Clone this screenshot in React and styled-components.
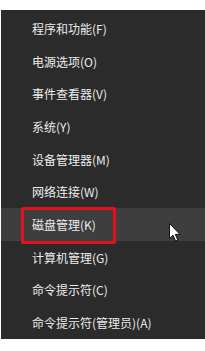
import styled, { createGlobalStyle } from 'styled-components';

const GlobalStyle = createGlobalStyle`
  html, body {
    margin: 0;
    padding: 0;
    background: #ffffff;
  }
`;

const Menu = styled.div`
  position: relative;
  margin: 10px 0 0 1px;
  width: 204px;
  height: 329px;
  box-sizing: border-box;
  padding-top: 2px;
  background: #2b2b2b;
  display: flex;
  flex-direction: column;
  font-family: "Noto Sans CJK SC", "Noto Sans", sans-serif;
`;

const Item = styled.div`
  height: 32.7px;
  display: flex;
  align-items: center;
  padding-left: 31px;
  font-size: 12px;
  color: #ebebeb;
  background: ${props => (props.$hover ? '#3e3e3e' : 'transparent')};
`;

const Mark = styled.div`
  position: absolute;
  left: 20px;
  top: 197px;
  width: 95px;
  height: 37px;
  box-sizing: border-box;
  border: 3px solid #e3101c;
  border-radius: 2px;
`;

const Cursor = styled.svg`
  position: absolute;
  left: 168px;
  top: 213px;
`;

const items = [
  '程序和功能(F)',
  '电源选项(O)',
  '事件查看器(V)',
  '系统(Y)',
  '设备管理器(M)',
  '网络连接(W)',
  '磁盘管理(K)',
  '计算机管理(G)',
  '命令提示符(C)',
  '命令提示符(管理员)(A)',
];

export default function App() {
  return (
    <>
      <GlobalStyle />
      <Menu>
        {items.map((t, i) => (
          <Item key={t} $hover={i === 6}>{t}</Item>
        ))}
        <Mark />
        <Cursor width="12" height="19" viewBox="0 0 12 19">
          <path
            d="M0.5 0.5 L0.5 15.5 L4 12.2 L6.6 18 L8.8 17 L6.3 11.4 L11 11.4 Z"
            fill="#ffffff"
            stroke="#111111"
            strokeWidth="1"
            strokeLinejoin="round"
          />
        </Cursor>
      </Menu>
    </>
  );
}
